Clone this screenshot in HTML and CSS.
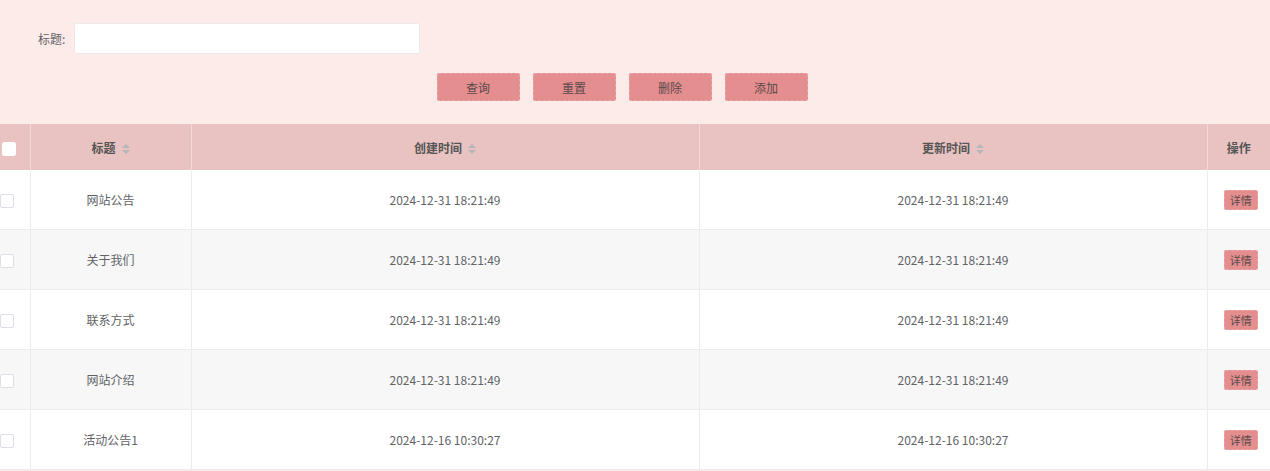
FILE: index.html
```html
<!DOCTYPE html>
<html lang="zh-CN">
<head>
    <meta charset="UTF-8">
    <meta name="viewport" content="width=device-width, initial-scale=1.0">
    <title>公告管理</title>
    <link rel="stylesheet" href="styles.css">
</head>
<body>
    <div class="buscador">
        <div class="campo">
            <label>标题:</label>
            <input type="text">
        </div>
        <div class="acciones">
            <button class="btn">查询</button>
            <button class="btn">重置</button>
            <button class="btn">删除</button>
            <button class="btn">添加</button>
        </div>
    </div>
    <table class="tabla">
        <colgroup>
            <col class="c-check">
            <col class="c-titulo">
            <col class="c-fecha">
            <col class="c-fecha">
            <col class="c-op">
        </colgroup>
        <thead>
            <tr>
                <th><span class="check check-head"></span></th>
                <th>标题<span class="orden"></span></th>
                <th>创建时间<span class="orden"></span></th>
                <th>更新时间<span class="orden"></span></th>
                <th>操作</th>
            </tr>
        </thead>
        <tbody id="filas"></tbody>
    </table>
    <script>
        // Datos de la tabla
        const avisos = [
            ['网站公告', '2024-12-31 18:21:49', '2024-12-31 18:21:49'],
            ['关于我们', '2024-12-31 18:21:49', '2024-12-31 18:21:49'],
            ['联系方式', '2024-12-31 18:21:49', '2024-12-31 18:21:49'],
            ['网站介绍', '2024-12-31 18:21:49', '2024-12-31 18:21:49'],
            ['活动公告1', '2024-12-16 10:30:27', '2024-12-16 10:30:27']
        ];
        const filas = document.getElementById('filas');
        avisos.forEach(a => {
            const tr = document.createElement('tr');
            tr.innerHTML = `<td><span class="check"></span></td>
                <td>${a[0]}</td><td>${a[1]}</td><td>${a[2]}</td>
                <td><button class="btn-detalle">详情</button></td>`;
            filas.appendChild(tr);
        });
    </script>
</body>
</html>
```

FILE: styles.css
```css
body {
    margin: 0;
    background-color: #fdebe9;
    font-family: "Noto Sans CJK SC", "Liberation Sans", sans-serif;
    font-size: 12px;
    color: #606266;
    overflow: hidden;
}
.buscador {
    padding: 23px 0 23px;
}
.campo {
    display: flex;
    align-items: center;
    padding-left: 38px;
}
.campo label {
    color: #606266;
    margin-right: 9px;
}
.campo input {
    width: 346px;
    height: 31px;
    box-sizing: border-box;
    border: 1px solid #eceaea;
    border-radius: 2px;
    background: #fff;
    outline: none;
}
.acciones {
    display: flex;
    justify-content: center;
    gap: 13px;
    margin-top: 19px;
    padding-right: 26px;
}
.btn {
    width: 83px;
    height: 28px;
    border: 1px dashed #e6a6a7;
    border-radius: 2px;
    background-color: #e58e8f;
    color: #5a4a4a;
    font-family: inherit;
    font-size: 12px;
    cursor: pointer;
}
.tabla {
    width: 1270px;
    border-collapse: collapse;
    table-layout: fixed;
    background: #fff;
}
.c-check { width: 30px; }
.c-titulo { width: 161px; }
.c-fecha { width: 508px; }
.c-op { width: 63px; }
.tabla th {
    height: 46px;
    background-color: #e9c3c1;
    color: #555;
    font-weight: bold;
    border-left: 1px solid #f1d9d7;
    padding: 0;
}
.tabla td {
    height: 59px;
    text-align: center;
    border-left: 1px solid #ececec;
    border-bottom: 1px solid #ececec;
    padding: 0;
    color: #606266;
}
.tabla th:first-child,
.tabla td:first-child {
    border-left: none;
    text-align: left;
}
.tabla tbody tr:nth-child(even) td {
    background-color: #f7f7f7;
}
.check {
    display: inline-block;
    width: 12px;
    height: 12px;
    border: 1px solid #dcdfe6;
    border-radius: 2px;
    background: #fff;
    vertical-align: middle;
    margin-left: 0;
}
.check-head {
    margin-left: 2px;
    border-color: #fff;
}
.orden {
    display: inline-block;
    position: relative;
    width: 8px;
    height: 10px;
    margin-left: 6px;
    vertical-align: middle;
}
.orden::before,
.orden::after {
    content: "";
    position: absolute;
    left: 0;
    border-left: 4px solid transparent;
    border-right: 4px solid transparent;
}
.orden::before {
    top: 0;
    border-bottom: 4px solid #b5b5bb;
}
.orden::after {
    bottom: 0;
    border-top: 4px solid #b5b5bb;
}
.btn-detalle {
    width: 34px;
    height: 20px;
    padding: 0;
    border: 1px dashed #eaa5a6;
    border-radius: 2px;
    background-color: #e58e8f;
    color: #5a4a4a;
    font-family: inherit;
    font-size: 11px;
    margin-left: 4px;
    cursor: pointer;
}
```
